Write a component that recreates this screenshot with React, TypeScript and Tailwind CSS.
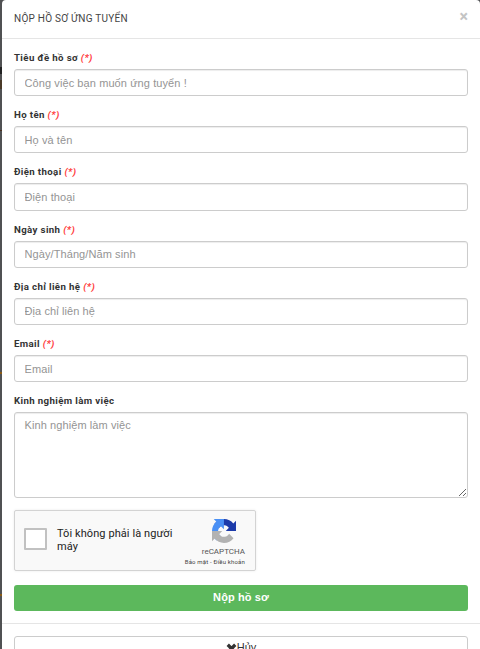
import React from "react";

const fields = [
  { label: "Tiêu đề hồ sơ", placeholder: "Công việc bạn muốn ứng tuyển !" },
  { label: "Họ tên", placeholder: "Họ và tên" },
  { label: "Điện thoại", placeholder: "Điện thoại" },
  { label: "Ngày sinh", placeholder: "Ngày/Tháng/Năm sinh" },
  { label: "Địa chỉ liên hệ", placeholder: "Địa chỉ liên hệ" },
  { label: "Email", placeholder: "Email" },
];

function RecaptchaLogo() {
  return (
    <svg viewBox="0 0 64 64" className="h-6 w-6">
      <path
        fill="#1c3aa9"
        d="M64 31.955l-.033-1.37V4.687l-7.16 7.16C50.948 4.674 42.033.093 32.05.093c-10.4 0-19.622 4.96-25.458 12.64l11.736 11.86a15.55 15.55 0 0 1 4.754-5.334c2.05-1.6 4.952-2.906 8.968-2.906.485 0 .86.057 1.135.163 4.976.393 9.288 3.14 11.828 7.124l-8.307 8.307L64 31.953"
      />
      <path
        fill="#4a90f5"
        d="M31.862.094l-1.37.033H4.594l7.16 7.16C4.58 13.147 0 22.06 0 32.046c0 10.4 4.96 19.622 12.64 25.458L24.5 45.768a15.55 15.55 0 0 1-5.334-4.754c-1.6-2.05-2.906-4.952-2.906-8.968 0-.485.057-.86.163-1.135.393-4.976 3.14-9.288 7.124-11.828l8.307 8.307L31.86.095"
      />
      <path
        fill="#b2b2b2"
        d="M.001 32.045l.033 1.37v25.898l7.16-7.16c5.86 7.173 14.774 11.754 24.76 11.754 10.4 0 19.622-4.96 25.458-12.64l-11.736-11.86a15.55 15.55 0 0 1-4.754 5.334c-2.05 1.6-4.952 2.906-8.968 2.906-.485 0-.86-.057-1.135-.163-4.976-.393-9.288-3.14-11.828-7.124l8.307-8.307c-10.522.04-22.4.066-27.295-.005"
      />
    </svg>
  );
}

function Recaptcha() {
  return (
    <div className="flex h-[61px] w-[242px] justify-between rounded-[2px] border border-[#d3d3d3] bg-[#f9f9f9] pl-[9px] pr-[10px] shadow-[0_0_3px_rgba(0,0,0,0.08)]">
      <div className="flex items-center">
        <div className="mt-[-3px] h-[22px] w-[23px] rounded-[1px] border-2 border-[#c1c1c1] bg-white" />
        <div className="ml-[10px] mt-[-2px] w-[122px] text-[11px] leading-[13px] tracking-[0.08px] text-[#222]">
          Tôi không phải là người máy
        </div>
      </div>
      <div className="flex flex-col items-end pt-[8px] text-[#555]">
        <div className="mr-[9px]">
          <RecaptchaLogo />
        </div>
        <div className="mt-[4px] text-[8px] leading-[10px] whitespace-nowrap">reCAPTCHA</div>
        <div className="text-[6px] leading-[9px] tracking-[0.17px] whitespace-nowrap text-[#444]">
          Bảo mật - Điều khoản
        </div>
      </div>
    </div>
  );
}

export default function App() {
  return (
    <div className="h-[649px] w-[480px] overflow-hidden bg-[#505153] bg-[linear-gradient(#505153_67px,#222_67px,#222_74px,#505153_74px,#505153_80px,#4a3a28_80px,#4a3a28_89px,#505153_89px,#505153_130px,#4a3020_130px,#4a3020_131px,#505153_131px,#505153_372px,#8a5a14_372px,#8a5a14_374px,#505153_374px,#505153_594px,#8a5a14_594px,#8a5a14_596px,#505153_596px)] pl-[2px] font-[Roboto,'Liberation_Sans',sans-serif] text-[#333]">
      <div className="h-[660px] rounded-t-[4px] bg-white">
        <header className="flex h-[39px] justify-between border-b border-[#e5e5e5] pl-3 pr-3 pt-[10px]">
          <h4 className="text-[10px] leading-[18px] tracking-[0.25px] text-[#444]">NỘP HỒ SƠ ỨNG TUYỂN</h4>
          <button className="h-[14px] text-[16px] leading-[14px] font-bold text-[#c4c4c4]">×</button>
        </header>

        <form className="px-3 pt-[11px]">
          {fields.map((field) => (
            <div key={field.label} className="h-[57.2px]">
              <label className="block h-[19px] text-[9.7px] leading-[16px] font-bold tracking-[0.36px]">
                {field.label} <em className="text-[#ff3b3b]">(*)</em>
              </label>
              <input
                className="block h-[27.2px] w-full rounded-[3px] border border-[#ccc] px-[9.5px] font-['Liberation_Sans',sans-serif] text-[11px] tracking-[0.09px] shadow-[inset_0_1px_1px_rgba(0,0,0,0.075)] placeholder:text-[#949494]"
                placeholder={field.placeholder}
              />
            </div>
          ))}
          <label className="block h-[19px] text-[9.7px] leading-[16px] font-bold tracking-[0.36px]">
            Kinh nghiệm làm việc
          </label>
          <textarea
            className="block h-[86px] w-full resize rounded-[3px] border border-[#ccc] px-[9.5px] py-[4px] font-['Liberation_Sans',sans-serif] text-[11px] leading-[16px] tracking-[0.09px] shadow-[inset_0_1px_1px_rgba(0,0,0,0.075)] placeholder:text-[#949494]"
            placeholder="Kinh nghiệm làm việc"
          />
          <div className="mt-[12px]">
            <Recaptcha />
          </div>
          <button className="mt-[14px] block h-[26px] w-full rounded-[3px] bg-[#5cb85c] pb-[2px] font-['Liberation_Sans',sans-serif] text-[11px] font-bold tracking-[0.1px] text-white">
            Nộp hồ sơ
          </button>
        </form>

        <footer className="mt-[12px] border-t border-[#e5e5e5] px-3 pt-[12px]">
          <button className="flex h-[27px] w-full items-center justify-center rounded-[3px] border border-[#ccc] text-[11px]">
            <svg viewBox="0 0 10 10" className="mt-[-3px] h-[11px] w-[11px]">
              <path d="M1.6 1.6L8.4 8.4M8.4 1.6L1.6 8.4" stroke="#333" strokeWidth="3" />
            </svg>
            <span className="mt-[-4px] font-['Liberation_Sans',sans-serif]">Hủy</span>
          </button>
        </footer>
      </div>
    </div>
  );
}
